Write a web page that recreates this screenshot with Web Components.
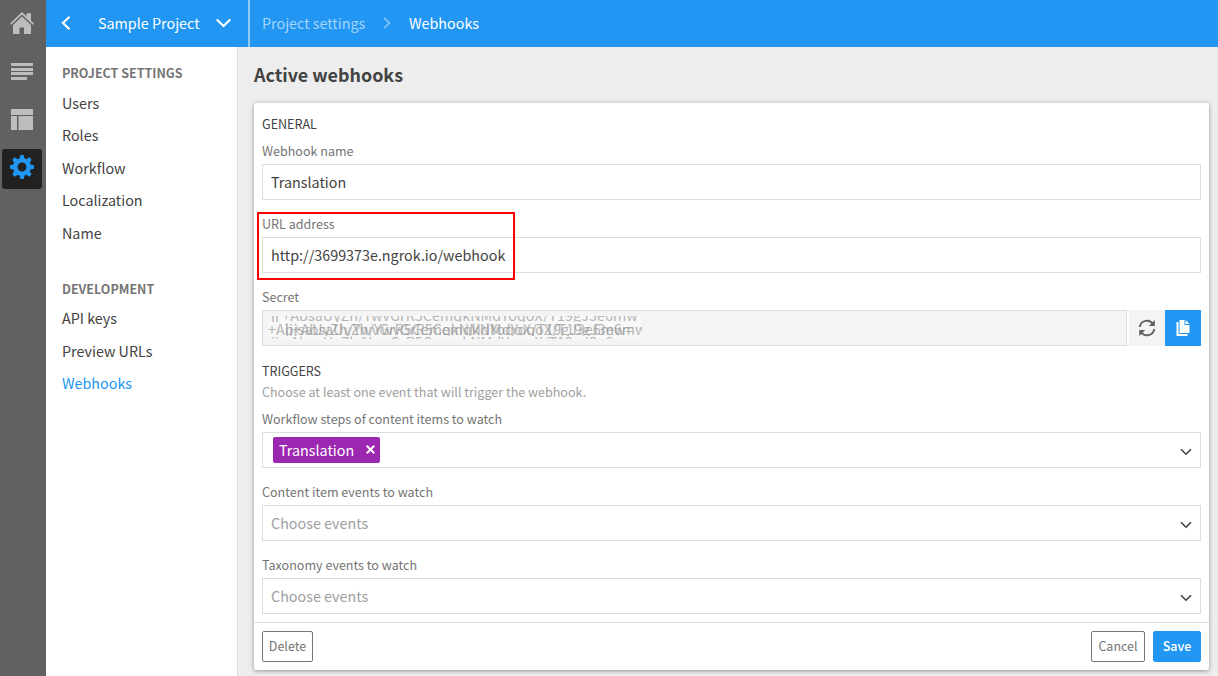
<!DOCTYPE html>
<html lang="en"><head><meta charset="utf-8"><title>Webhooks</title>
<style>html,body{margin:0;height:100%;overflow:hidden}body{font-family:"Noto Sans CJK SC","Noto Sans",sans-serif;color:#424242}</style></head>
<body><webhook-app></webhook-app>
<script>
const define=(name,html)=>customElements.define(name,class extends HTMLElement{
  constructor(){super();const t=document.createElement('template');t.innerHTML=html;
    this.attachShadow({mode:'open'}).append(t.content.cloneNode(true));}
});

define('nav-rail',`<style>
:host{display:flex;flex-direction:column;align-items:center;gap:8px;padding:3px 2px 0 0;background:#616161}
.i{width:40px;height:40px;border-radius:3px;display:grid;place-items:center;color:#bdbdbd}
.i.gap{margin-top:1px}
.i.on{background:#212121;color:#2196f3}
svg{display:block;fill:currentColor}
</style>
<div class="i"><svg width="24" height="24" viewBox="0 0 24 24"><path d="M12 1 0 12.600l1.300 1.200L12 3.600l10.700 10.200 1.300-1.200-3-2.900V2.300h-4.500v3z"/><path d="M12 5.600 3 14v9h6.500v-6.500h4.500V23H21v-9z"/></svg></div>
<div class="i gap"><svg width="22" height="18" viewBox="0 0 22 18"><path d="M0 0h22v3H0zM0 5h22v3H0zM0 9h22v3H0zM0 14h16v3H0z"/></svg></div>
<div class="i"><svg width="22" height="22" viewBox="0 0 22 22"><path d="M0 0h22v6H0zM0 7h6v14H0zM7.500 7H22v14H7.500z"/></svg></div>
<div class="i on gap"><svg width="24" height="24" viewBox="-12 -12 24 24" style="margin-top:-4px"><defs><path id="t" d="M-2.600-8-1.700-12h3.400L2.600-8z"/></defs><path fill-rule="evenodd" d="M0-9A9 9 0 1 1 0 9 9 9 0 1 1 0-9M0-4.500A4.500 4.500 0 1 0 0 4.500 4.500 4.500 0 1 0 0-4.500"/><use href="#t"/><use href="#t" transform="rotate(45)"/><use href="#t" transform="rotate(90)"/><use href="#t" transform="rotate(135)"/><use href="#t" transform="rotate(180)"/><use href="#t" transform="rotate(225)"/><use href="#t" transform="rotate(270)"/><use href="#t" transform="rotate(315)"/></svg></div>`);

define('top-bar',`<style>
:host{display:flex;height:47px;background:#2196f3;color:#fff;font-size:14.340px;line-height:45px;white-space:nowrap}
.p{display:flex;align-items:center;border-right:2px solid #90caf9;box-sizing:border-box;width:204px;padding-left:15px}
.p span{width:103px;margin:0 15px 0 27px}
.p span,.b span{height:47px}
.b{display:flex;align-items:center;padding-left:12px}
.b span:first-child{color:#a6d5fa;width:121px}
.b svg{margin-right:18px}
svg{display:block;fill:none;stroke:#fff;stroke-width:2.200}
</style>
<div class="p"><svg width="10" height="14" viewBox="0 0 10 14" style="margin-top:-2px"><path d="M8.500.800 2 7l6.500 6.200"/></svg><span>Sample Project</span><svg width="15" height="10" viewBox="0 0 15 10" style="margin-top:-1px"><path d="M.800 1.500 7.500 8l6.700-6.500"/></svg></div>
<div class="b"><span>Project settings</span><svg width="8" height="12" viewBox="0 0 8 12" style="stroke:#90caf9;stroke-width:1.600;margin-top:-2px"><path d="m1 1 5.500 5L1 11"/></svg><span>Webhooks</span></div>`);

define('side-group',`<style>
:host{display:block}
h2{margin:0;font-size:12.500px;line-height:20px;height:20px;font-weight:700;color:#757575;white-space:nowrap}
nav{display:flex;flex-direction:column;margin-top:var(--gap,3.500px)}
</style><h2><slot name="title"></slot></h2><nav><slot></slot></nav>`);
define('side-link',`<style>:host{display:block;font-size:14.340px;line-height:32.500px;height:32.500px;white-space:nowrap}:host([active]){color:#2196f3}</style><slot></slot>`);
define('side-menu',`<style>
:host{display:flex;flex-direction:column;gap:30px;padding:16px 0 0 16px;background:#fff;border-right:1px solid #ddd}
</style>
<side-group><span slot="title">PROJECT SETTINGS</span><side-link>Users</side-link><side-link>Roles</side-link><side-link>Workflow</side-link><side-link>Localization</side-link><side-link>Name</side-link></side-group>
<side-group style="--gap:3.100px"><span slot="title">DEVELOPMENT</span><side-link>API keys</side-link><side-link>Preview URLs</side-link><side-link active>Webhooks</side-link></side-group>`);

define('form-field',`<style>
:host{display:block;position:relative;margin-bottom:11px}
label{display:block;font-size:12.550px;line-height:26px;height:26px;color:#757575;white-space:nowrap}
.row{display:flex;height:36px}
.box{flex:1;display:flex;align-items:center;box-sizing:border-box;border:1px solid #ddd;padding:0 8px;font-size:14.340px;line-height:34px;white-space:nowrap}
:host([placeholder]) .box{color:#9e9e9e}
:host([readonly]) .box{background:#f4f4f4;padding:0 5px}
svg{display:none;margin-left:auto;margin-right:0;fill:none;stroke:#424242;stroke-width:1.600}
:host([select]) svg{display:block}
:host([marked])::after{content:"";position:absolute;left:-5px;top:1px;width:254px;height:64px;border:2px solid #f00}
</style><label><slot name="label"></slot></label><div class="row"><div class="box"><slot></slot><svg width="12" height="8" viewBox="0 0 12 8" style="margin-top:4px"><path d="m1 1.200 5 5 5-5"/></svg></div><slot name="actions"></slot></div>`);

define('tag-chip',`<style>
:host{display:flex;align-items:center;box-sizing:border-box;width:107px;height:26px;margin:0 0 0 2px;padding:0 5px 0 6px;background:#9c27b0;color:#fff;border-radius:2px;line-height:26px;justify-content:space-between}
svg{stroke:#fff;stroke-width:2}
</style><slot></slot><svg width="9" height="9" viewBox="0 0 9 9" style="margin-top:-2px"><path d="m.8.8 7.400 7.400m0-7.400L.8 8.200"/></svg>`);

define('secret-value',`<style>
:host{display:grid;grid-template-rows:6px 14px 3px;width:374px;height:23px;margin-bottom:1px;overflow:hidden;background:#f8f8f8;color:#8e8e8e}
div{display:grid;overflow:hidden;align-items:start}
span{grid-area:1/1;opacity:.62;white-space:nowrap;line-height:16px;margin-top:-1px}
.top span{line-height:14px;margin-top:-8px;padding-left:3px;letter-spacing:.05px}
.low span{line-height:14px;margin-top:-1px;padding-left:3px;letter-spacing:.05px}
</style><div class="top"><span>jj +AbsaUyZh/YwvGrR5CemqkNMdYoqoX/T19gJ3e6mw</span></div><div><span>+AbjsaUyZh/YwvGrR5CemqkNMdYoqoX/T19gJ3e6mw=</span><span style="padding-left:17px">jj+AbsaUyZh/YwvGrR5CemqkNMdYoqoX/T19gJ3e6mw</span></div><div class="low"><span>jj +AbsaUyZh/YwvGrR5CemqkNMdYoqoX/T19gJ3e6mw</span></div>`);

define('icon-button',`<style>
:host{display:grid;place-items:center;width:36px;background:#f4f4f4;color:#616161}
:host([primary]){background:#2196f3;color:#fff}
</style><slot></slot>`);
define('text-button',`<style>
:host{display:block;box-sizing:border-box;height:31px;border:1px solid #757575;border-radius:2px;color:#757575;font-size:12.530px;line-height:28px;text-align:center}
:host([primary]){background:#2196f3;border-color:#2196f3;color:#fff;font-weight:500}
</style><slot></slot>`);

define('webhook-card',`<style>
:host{display:block;box-sizing:border-box;width:955px;height:567px;background:#fff;border-radius:2px;box-shadow:0 1px 4px rgba(0,0,0,.38)}
.body{padding:8px 8px 0}
h3{margin:0;font-weight:400;font-size:12.550px;line-height:26px;height:27px}
h3.sub{line-height:28px}
p{margin:0;font-size:12.550px;line-height:16px;height:22px;color:#9e9e9e}
form-field.last{margin-bottom:8px}
footer{display:flex;gap:8px;border-top:1px solid #ddd;padding:8px}
.push{margin-left:auto}
</style>
<div class="body"><h3>GENERAL</h3>
<form-field><span slot="label">Webhook name</span>Translation</form-field>
<form-field marked><span slot="label">URL address</span>http://3699373e.ngrok.io/webhook</form-field>
<form-field readonly><span slot="label">Secret</span><secret-value></secret-value>
<icon-button slot="actions" style="margin-left:2px"><svg width="18" height="18" viewBox="0 0 18 18" fill="none" stroke="currentColor" stroke-width="2"><path d="M1.800 8A7.200 7.200 0 0 1 15 5M16.200 10A7.200 7.200 0 0 1 3 13"/><path d="M16.800 1v6h-6zM1.200 17v-6h6z" fill="currentColor" stroke="none"/></svg></icon-button>
<icon-button slot="actions" primary><svg width="14" height="18" viewBox="0 0 14 18" fill="#fff"><path d="M.5 3h2v12h9v2H.5z"/><path d="M3.500 1h5v5h5v8h-10zM9.500 1l4 4h-4z"/></svg></icon-button></form-field>
<h3 class="sub">TRIGGERS</h3><p>Choose at least one event that will trigger the webhook.</p>
<form-field select><span slot="label">Workflow steps of content items to watch</span><tag-chip>Translation</tag-chip></form-field>
<form-field select placeholder><span slot="label">Content item events to watch</span>Choose events</form-field>
<form-field select placeholder class="last"><span slot="label">Taxonomy events to watch</span>Choose events</form-field></div>
<footer><text-button style="width:51px">Delete</text-button><text-button class="push" style="width:54px">Cancel</text-button><text-button primary style="width:48px">Save</text-button></footer>`);

define('webhook-app',`<style>
:host{display:grid;grid-template:47px 1fr/46px 192px 1fr;height:100vh}
nav-rail{grid-row:1/3}top-bar{grid-column:2/4}side-menu{box-sizing:border-box;width:192px}
main{background:#ededed;padding:10px 0 0 16px}
h1{margin:0;font-size:17.900px;line-height:34px;height:46px;font-weight:700}
</style><nav-rail></nav-rail><top-bar></top-bar><side-menu></side-menu><main><h1>Active webhooks</h1><webhook-card></webhook-card></main>`);
</script></body></html>
